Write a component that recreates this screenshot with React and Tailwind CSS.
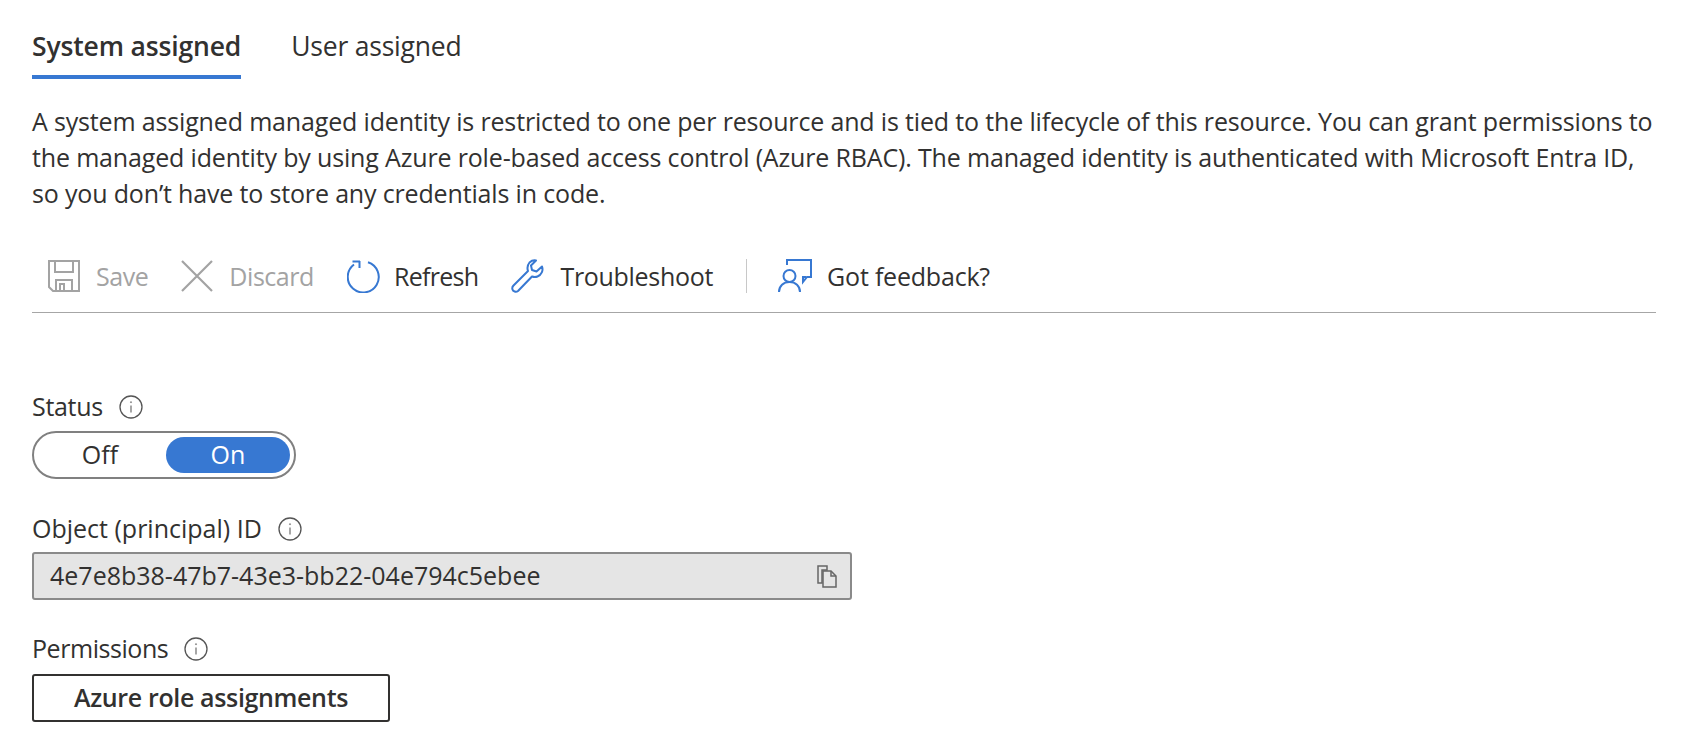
import React from 'react';

const font = { fontFamily: '"Open Sans", "Noto Sans", sans-serif' };

function InfoIcon() {
    return (
        <svg width="24" height="24" viewBox="0 0 24 24" fill="none" stroke="#555" strokeWidth="1.3">
            <circle cx="12" cy="12" r="11" />
            <path d="M12 10.5v7" stroke="#777" />
            <circle cx="12" cy="7.2" r="0.6" fill="#777" stroke="#777" strokeWidth="0.6" />
        </svg>
    );
}

function SaveIcon() {
    return (
        <svg width="32" height="32" viewBox="0 0 32 32" fill="none" stroke="#a3a3a3" strokeWidth="2">
            <path d="M1 1h30v30H5l-4-4z" />
            <path d="M7 1v11h18V1" />
            <path d="M8 31V20h16v11" />
            <path d="M12 31v-7h4v7" />
        </svg>
    );
}

function DiscardIcon() {
    return (
        <svg width="32" height="32" viewBox="0 0 32 32" fill="none" stroke="#a3a3a3" strokeWidth="2.2">
            <path d="M1 1l30 30M31 1L1 31" />
        </svg>
    );
}

function RefreshIcon() {
    return (
        <svg width="34" height="34" viewBox="0 0 34 34" fill="none" stroke="#3778d2" strokeWidth="2">
            <path d="M21 3.2A15.5 15.5 0 1 1 7 5.5" />
            <path d="M5.5 2.5h7.5M12.5 2v7" />
        </svg>
    );
}

function WrenchIcon() {
    return (
        <svg width="34" height="34" viewBox="0 0 34 34" fill="none" stroke="#3778d2" strokeWidth="2" strokeLinejoin="round">
            <path d="M25 1.500l-5 5 1 4.500 4.500 1.500 5.500-5c1.500 4-.5 8.500-4.500 10-2 .8-4 .5-5.500 0L7 32c-2 1.500-5 .5-5.500-1.500-.5-1.500 0-3 1-4L17 12c-1-3-.5-6 1.500-8.500 2-1.800 4.500-2.500 6.500-2z" />
        </svg>
    );
}

function FeedbackIcon() {
    return (
        <svg width="34" height="34" viewBox="0 0 34 34" fill="none" stroke="#3778d2" strokeWidth="2">
            <path d="M9 6V1h24v17h-4l-4 5v-5h3" />
            <circle cx="11.500" cy="17" r="6" />
            <path d="M1 33c0-6 4.500-10 10.500-10S22 27 22 33" />
        </svg>
    );
}

function CopyIcon() {
    return (
        <svg width="24" height="24" viewBox="0 0 24 24" fill="none" stroke="#666" strokeWidth="1.500">
            <path d="M2 2h9v4H6v13H2z" />
            <path d="M7 7h8l5 5v11H7z" />
            <path d="M15 7v5h5" />
        </svg>
    );
}

function ToolbarItem({ icon, label, disabled, className = 'gap-[14px]' }) {
    return (
        <div className={`flex items-center ${className} ${disabled ? 'text-[#a3a3a3]' : 'text-[#323130]'}`}>
            {icon}
            <span className="mt-[2px]">{label}</span>
        </div>
    );
}

export default function App() {
    return (
        <div className="w-[1696px] h-[756px] overflow-hidden bg-white text-[#323130] text-[25px] pl-8 pr-[40px]" style={font}>
            <div className="flex items-start gap-[50px] pt-[26px]">
                <div className="flex flex-col">
                    <span className="text-[26.500px] font-semibold leading-[40px] h-[40px] tracking-[-0.15px]">System assigned</span>
                    <div className="h-1 bg-[#3778d2] mt-[9px]" />
                </div>
                <span className="text-[26.500px] leading-[40px] tracking-[-0.2px]">User assigned</span>
            </div>

            <p className="mt-[24px] leading-[36px] tracking-[-0.16px] whitespace-nowrap">
                A system assigned managed identity is restricted to one per resource and is tied to the lifecycle of this resource. You can grant permissions to<br />
                the managed identity by using Azure role-based access control (Azure RBAC). The managed identity is authenticated with Microsoft Entra ID,<br />
                so you don’t have to store any credentials in code.
            </p>

            <div className="mt-[48px] h-[54px] border-b border-[#a6a6a6] flex items-start pl-4 tracking-[-0.45px]">
                <div className="flex items-center gap-[33px] h-[34px]">
                    <ToolbarItem icon={<SaveIcon />} label="Save" disabled className="gap-[16px]" />
                    <ToolbarItem icon={<DiscardIcon />} label="Discard" disabled className="gap-[16px]" />
                    <ToolbarItem icon={<RefreshIcon />} label="Refresh" className="gap-[13px] tracking-[-0.7px]" />
                    <ToolbarItem icon={<WrenchIcon />} label="Troubleshoot" className="gap-[15px] tracking-[-0.3px]" />
                    <div className="w-px h-[34px] bg-[#c8c8c8]" />
                    <ToolbarItem icon={<FeedbackIcon />} label="Got feedback?" className="gap-[15px] ml-[-2px] tracking-[-0.2px]" />
                </div>
            </div>

            <div className="mt-[76px] flex items-center gap-[16px] h-[36px]">
                <span className="tracking-[-0.3px]">Status</span>
                <InfoIcon />
            </div>
            <div className="mt-[6px] w-[264px] h-[48px] rounded-full border-2 border-[#808080] flex items-center p-1">
                <span className="flex-1 text-center pr-1">Off</span>
                <span className="w-[124px] h-[36px] rounded-full bg-[#3778d2] text-white text-center leading-[35px]">On</span>
            </div>

            <div className="mt-[32px] flex items-center gap-[16px] h-[36px]">
                <span>Object (principal) ID</span>
                <InfoIcon />
            </div>
            <div className="mt-[5px] w-[820px] h-[48px] rounded-[3px] border-2 border-[#8a8a8a] bg-[#e5e5e5] flex items-center justify-between pl-4 pr-[10px]">
                <span>4e7e8b38-47b7-43e3-bb22-04e794c5ebee</span>
                <CopyIcon />
            </div>

            <div className="mt-[31px] flex items-center gap-[16px] h-[36px]">
                <span className="tracking-[-0.45px]">Permissions</span>
                <InfoIcon />
            </div>
            <div className="mt-[7px] w-[358px] h-[48px] rounded-[3px] border-2 border-[#323130] flex items-center justify-center font-semibold tracking-[-0.35px]">
                Azure role assignments
            </div>
        </div>
    );
}
